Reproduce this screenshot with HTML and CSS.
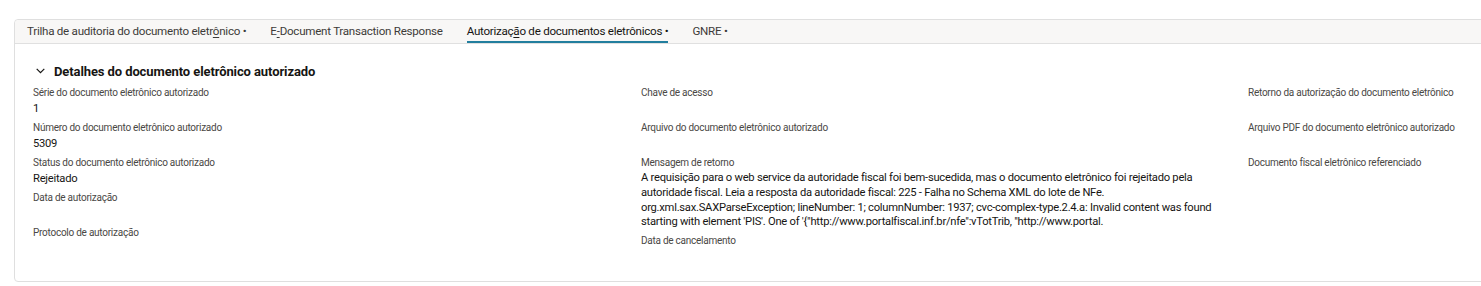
FILE: index.html
```html
<!DOCTYPE html>
<html lang="pt">
<head>
<meta charset="utf-8">
<link rel="stylesheet" href="styles.css">
</head>
<body>
<div class="page">
  <div class="card">
    <div class="tabs">
      <div class="tab">Trilha de auditoria do documento eletr<u>ô</u>nico •</div>
      <div class="tab">E<u>-</u>Document Transaction Response</div>
      <div class="tab active">Autorizaç<u>ã</u>o de documentos eletrônicos •</div>
      <div class="tab">GNRE •</div>
    </div>
    <div class="body">
      <div class="section-head">
        <svg class="chev" width="9" height="6" viewBox="0 0 9 6"><path d="M0.7 0.8 L4.5 4.6 L8.3 0.8" fill="none" stroke="#161513" stroke-width="1.2"/></svg>
        <span>Detalhes do documento eletrônico autorizado</span>
      </div>
      <div class="grid">
        <div class="col">
          <div class="field"><div class="label">Série do documento eletrônico autorizado</div><div class="value">1</div></div>
          <div class="field"><div class="label">Número do documento eletrônico autorizado</div><div class="value">5309</div></div>
          <div class="field"><div class="label">Status do documento eletrônico autorizado</div><div class="value">Rejeitado</div></div>
          <div class="field"><div class="label">Data de autorização</div><div class="value"></div></div>
          <div class="field"><div class="label">Protocolo de autorização</div><div class="value"></div></div>
        </div>
        <div class="col">
          <div class="field"><div class="label">Chave de acesso</div><div class="value"></div></div>
          <div class="field"><div class="label">Arquivo do documento eletrônico autorizado</div><div class="value"></div></div>
          <div class="field"><div class="label">Mensagem de retorno</div><div class="value msg">A requisição para o web service da autoridade fiscal foi bem-sucedida, mas o documento eletrônico foi rejeitado pela autoridade fiscal. Leia a resposta da autoridade fiscal: 225 - Falha no Schema XML do lote de NFe. org.xml.sax.SAXParseException; lineNumber: 1; columnNumber: 1937; cvc-complex-type.2.4.a: Invalid content was found starting with element 'PIS'. One of '{"http://www.portalfiscal.inf.br/nfe":vTotTrib, "http://www.portal.</div></div>
          <div class="field"><div class="label">Data de cancelamento</div><div class="value"></div></div>
        </div>
        <div class="col">
          <div class="field"><div class="label">Retorno da autorização do documento eletrônico</div><div class="value"></div></div>
          <div class="field"><div class="label">Arquivo PDF do documento eletrônico autorizado</div><div class="value"></div></div>
          <div class="field"><div class="label">Documento fiscal eletrônico referenciado</div><div class="value"></div></div>
        </div>
      </div>
    </div>
  </div>
</div>
</body>
</html>
```
FILE: styles.css
```css
* { box-sizing: border-box; }
html, body { margin: 0; padding: 0; background: #fff; }
body { font-family: Roboto, "Noto Sans", sans-serif; color: #161513; overflow: hidden; }
.page { padding: 19px 0 0 14px; width: 1481px; height: 286px; overflow: hidden; }
.card {
  width: 1480px;
  height: 263px;
  border: 1px solid #dfdfdf;
  border-radius: 4px;
  background: #fff;
}
.tabs {
  display: flex;
  gap: 24px;
  height: 24px;
  padding-left: 12px;
  background: #f8f7f6;
  border-bottom: 1px solid #e0e0e0;
  border-radius: 4px 0 0 0;
}
.tab {
  font-size: 11.6px;
  letter-spacing: -0.26px;
  color: #3d3b39;
  line-height: 23px;
  border-bottom: 2px solid transparent;
  white-space: nowrap;
}
.tab u { text-underline-offset: 2px; }
.tab.active { color: #161513; border-bottom-color: #227e9e; }
.body { padding: 17px 0 0 18px; }
.section-head {
  display: flex;
  align-items: center;
  height: 20px;
  font-size: 13px;
  font-weight: 700;
  letter-spacing: -0.1px;
  margin-bottom: 4px;
}
.chev { margin: 0 9px 0 3px; }
.grid { display: grid; grid-template-columns: 608px 607px 1fr; }
.field { display: flex; flex-direction: column; }
.label { font-size: 10px; line-height: 16px; color: #4a4845; letter-spacing: -0.25px; white-space: nowrap; }
.value { font-size: 11.2px; line-height: 16px; min-height: 16px; margin-bottom: 3px; letter-spacing: -0.25px; }
.msg { width: 580px; line-height: 14.8px; }
```
